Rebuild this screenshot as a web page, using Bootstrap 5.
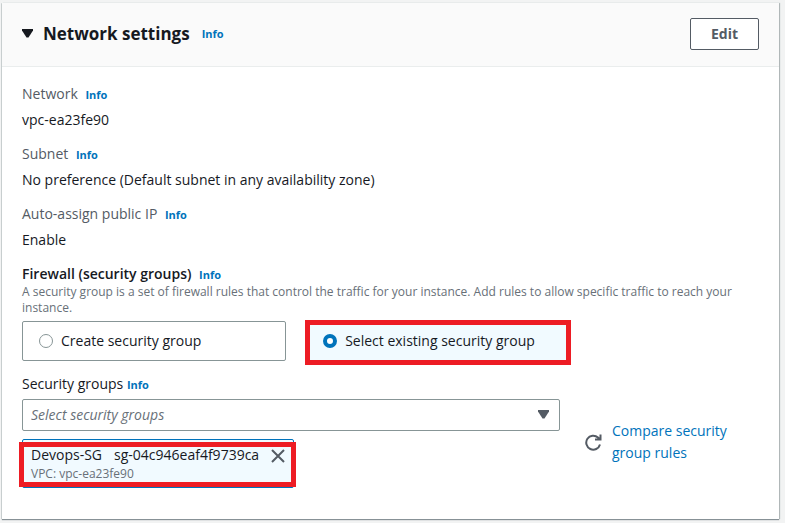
<!DOCTYPE html>
<html lang="en">
<head>
<meta charset="utf-8">
<meta name="viewport" content="width=device-width, initial-scale=1">
<title>Network settings</title>
<link href="https://cdn.jsdelivr.net/npm/bootstrap@5.3.0/dist/css/bootstrap.min.css" rel="stylesheet">
<style>
body { background: #f2f3f3; color: #16191f; font-family: "Open Sans", "Noto Sans", sans-serif; font-size: 14px; line-height: 20px; }
a { color: #0073bb; text-decoration: none; }
a:hover { text-decoration: underline; }
.page { padding: 3px 6px 4px 2px; }
.panel { border: 0; border-radius: 0; background: #fff; color: inherit; box-shadow: 0 1px 1px #879196, 1px 0 1px #b8c0c0, -1px 0 0 #d5dbdb; }
.panel-head { background: #fafafa; border-bottom: 1px solid #eaeded; padding: 15px 20px 16px; }
.panel-toggle { color: inherit; font-size: 17px; line-height: 24px; font-weight: 700; gap: 10px; }
.info { font-size: 11px; line-height: 12px; font-weight: 700; }
.btn-edit { --bs-btn-color: #545b64; --bs-btn-bg: #fff; --bs-btn-border-color: #545b64; --bs-btn-hover-color: #16191f; --bs-btn-hover-bg: #fafafa; --bs-btn-border-radius: 2px; --bs-btn-padding-x: 20px; --bs-btn-padding-y: 5px; --bs-btn-font-size: 14px; --bs-btn-font-weight: 700; --bs-btn-line-height: 20px; }
.panel-body { padding: 17px 20px 31px; }
.field-name { color: #545b64; margin-bottom: 6px; }
.field-value { margin: 0 0 14px; }
.group-title { font-size: 14px; line-height: 20px; font-weight: 600; }
.hint { color: #687078; font-size: 12px; line-height: 16px; margin: 1px 0 5px; }
.tiles { width: 74.4%; gap: 20px; margin-bottom: 13px; }
.tile { border: 1px solid #879596; border-radius: 2px; padding: 9px 16px; gap: 8px; }
.tile-on { background: #f1faff; border-color: #0073bb; }
.marked::after { content: ""; position: absolute; border: 5px solid #ed1c24; pointer-events: none; }
.tile.marked::after { inset: -2px -2px -5px; }
.token.marked::after { inset: 2px -3px 0 -4px; }
.radio { appearance: none; width: 14px; height: 14px; margin: 0; border: 1px solid #879596; border-radius: 50%; background: #fff; }
.radio:checked { border: 4px solid #0073bb; }
.picker { width: 73%; }
.picker-label { margin-bottom: 5px; }
.chooser { appearance: none; width: 100%; height: 32px; border: 1px solid #879596; border-radius: 2px; background: #fff; color: #687078; font-style: italic; padding: 0 32px 0 8px; }
.chooser-arrow { right: 11px; top: 11px; pointer-events: none; }
.token { border: 1px solid #0073bb; border-radius: 2px; background: #f1faff; margin-top: 8px; padding: 5px 8px; min-height: 48px; gap: 12px; }
.token-sub { color: #687078; font-size: 12px; line-height: 16px; margin-top: 1px; }
.plain { border: 0; background: none; padding: 0; line-height: 0; }
.side { gap: 10px; padding: 22px 0 0 25px; line-height: 22px; }
.compare { max-width: 130px; }
</style>
</head>
<body>
<main class="page">
<section class="card panel">
  <header class="panel-head d-flex align-items-center justify-content-between">
    <div class="d-flex align-items-baseline">
      <h2 class="m-0 lh-1"><button type="button" class="plain panel-toggle d-flex align-items-center" aria-expanded="true"><svg width="11" height="9" viewBox="0 0 11 9" aria-hidden="true"><path d="M0 0h11v1.500L6.500 8.500h-2L0 1.500z" fill="#16191f"/></svg>Network settings</button></h2>
      <a href="#" class="info ms-2 ps-1">Info</a>
    </div>
    <button type="button" class="btn btn-edit">Edit</button>
  </header>
  <div class="panel-body">
    <dl class="m-0">
      <dt class="field-name fw-normal">Network <a href="#" class="info ms-1">Info</a></dt>
      <dd class="field-value">vpc-ea23fe90</dd>
      <dt class="field-name fw-normal">Subnet <a href="#" class="info ms-1">Info</a></dt>
      <dd class="field-value">No preference (Default subnet in any availability zone)</dd>
      <dt class="field-name fw-normal">Auto-assign public IP <a href="#" class="info ms-1">Info</a></dt>
      <dd class="field-value">Enable</dd>
    </dl>
    <fieldset aria-describedby="fw-hint">
      <legend class="group-title m-0">Firewall (security groups) <a href="#" class="info ms-1">Info</a></legend>
      <p class="hint" id="fw-hint">A security group is a set of firewall rules that control the traffic for your instance. Add rules to allow specific traffic to reach your instance.</p>
      <div class="tiles d-flex">
        <label class="tile d-flex align-items-center flex-fill w-50" for="sg-new"><input class="radio" type="radio" name="sg" id="sg-new">Create security group</label>
        <label class="tile tile-on marked position-relative d-flex align-items-center flex-fill w-50" for="sg-old"><input class="radio" type="radio" name="sg" id="sg-old" checked>Select existing security group</label>
      </div>
    </fieldset>
    <div class="d-flex align-items-center">
      <div class="picker">
        <div class="picker-label"><label for="groups">Security groups</label> <a href="#" class="info">Info</a></div>
        <div class="position-relative d-flex">
          <select class="chooser" id="groups"><option>Select security groups</option></select>
          <svg class="chooser-arrow position-absolute" width="11" height="9" viewBox="0 0 11 9" aria-hidden="true"><path d="M0 0h11v1.500L6.500 8.500h-2L0 1.500z" fill="#545b64"/></svg>
        </div>
        <div class="token marked position-relative d-inline-flex align-items-start">
          <div>
            <div class="d-flex gap-2"><span class="pe-1">Devops-SG</span><span>sg-04c946eaf4f9739ca</span></div>
            <div class="token-sub">VPC: vpc-ea23fe90</div>
          </div>
          <button type="button" class="plain pt-1" aria-label="Remove Devops-SG"><svg width="14" height="14" viewBox="0 0 14 14"><path d="M1 1l12 12M13 1L1 13" stroke="#545b64" stroke-width="2" fill="none"/></svg></button>
        </div>
      </div>
      <div class="side d-flex align-items-center">
        <button type="button" class="plain" aria-label="Refresh"><svg width="17" height="17" viewBox="0 0 17 17"><path d="M15 10.500A7 7 0 1 1 13 3.500L15 5.500M15.500 0.500V5.500H10" stroke="#545b64" stroke-width="2" fill="none"/></svg></button>
        <a href="#" class="compare">Compare security group rules</a>
      </div>
    </div>
  </div>
</section>
</main>
<script src="https://cdn.jsdelivr.net/npm/bootstrap@5.3.0/dist/js/bootstrap.bundle.min.js"></script>
</body>
</html>
